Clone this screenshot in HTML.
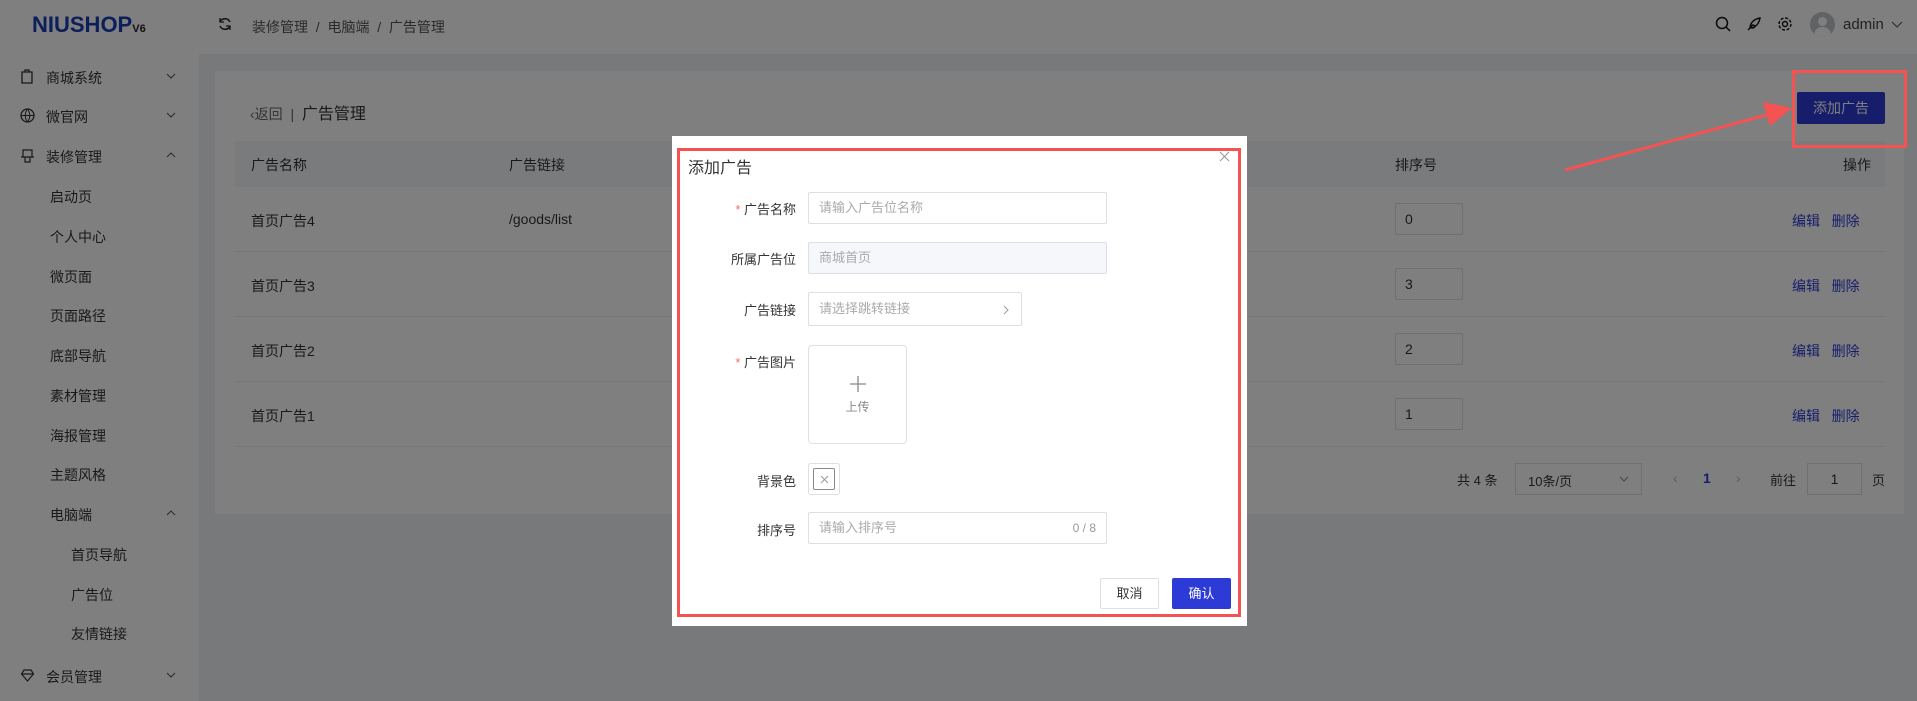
<!DOCTYPE html>
<html><head><meta charset="utf-8">
<style>
*{margin:0;padding:0;box-sizing:border-box}
body{width:1917px;height:701px;overflow:hidden;position:relative;background:#f0f2f5;font-family:"Liberation Sans","Noto Sans CJK SC",sans-serif;font-size:14px;color:#333}
.a{position:absolute}
.side{left:0;top:0;width:199px;height:701px;background:#fff}
.hdr{left:199px;top:0;width:1718px;height:55px;background:#fff;border-bottom:1px solid #eee}
.mi{position:absolute;left:0;width:199px;font-size:14px;color:#333}
.card{left:215px;top:71px;width:1689px;height:443px;background:#fff}
.th{left:235px;top:141px;width:1650px;height:46px;background:#f5f6fa}
.row{left:235px;width:1650px;border-bottom:1px solid #ebeef5;height:65px}
.sinp{width:68px;height:32px;border:1px solid #dcdfe6;border-radius:2px;padding-left:9px;line-height:30px}
.blue{color:#2d3bd6}
.ov{left:0;top:0;width:1917px;height:701px;background:rgba(0,0,0,0.5)}
.modal{left:672px;top:136px;width:575px;height:490px;background:#fff}
.lbl{position:absolute;right:451px;font-size:13px;color:#333;text-align:right}
.inp{position:absolute;left:136px;border:1px solid #dcdfe6;border-radius:2px;font-size:13px;color:#aaa;padding-left:10px}
svg.ic{position:absolute}
</style></head><body>
<div class="a side">
 <div class="a" style="left:32px;top:12px;font-size:22px;font-weight:bold;color:#1a3dba">NIUSHOP<span style="font-size:11px;color:#222">V6</span></div>
 <div class="mi" style="top:68px"><svg class="ic" style="left:20px;top:0" width="14" height="16"><path d="M2 4h10v11H2zM5 4V2h4v2" fill="none" stroke="#333" stroke-width="1.3"/></svg><span class="a" style="left:46px">商城系统</span><svg class="ic" style="left:166px;top:5px" width="10" height="6"><path d="M1 1l4 4 4-4" fill="none" stroke="#555"/></svg></div>
 <div class="mi" style="top:107px"><svg class="ic" style="left:20px;top:1px" width="15" height="15"><circle cx="7.5" cy="7.5" r="6.5" fill="none" stroke="#333" stroke-width="1.3"/><path d="M1 7.5h13M7.5 1c-3 4-3 9 0 13M7.5 1c3 4 3 9 0 13" fill="none" stroke="#333"/></svg><span class="a" style="left:46px">微官网</span><svg class="ic" style="left:166px;top:5px" width="10" height="6"><path d="M1 1l4 4 4-4" fill="none" stroke="#555"/></svg></div>
 <div class="mi" style="top:147px"><svg class="ic" style="left:20px;top:1px" width="15" height="15"><path d="M3 2h9v7H3zM1 9h13M5 9v5h5V9" fill="none" stroke="#333" stroke-width="1.2"/></svg><span class="a" style="left:46px">装修管理</span><svg class="ic" style="left:166px;top:5px" width="10" height="6"><path d="M1 5l4-4 4 4" fill="none" stroke="#555"/></svg></div>
 <div class="mi" style="top:187px"><span class="a" style="left:50px">启动页</span></div>
 <div class="mi" style="top:227px"><span class="a" style="left:50px">个人中心</span></div>
 <div class="mi" style="top:267px"><span class="a" style="left:50px">微页面</span></div>
 <div class="mi" style="top:306px"><span class="a" style="left:50px">页面路径</span></div>
 <div class="mi" style="top:346px"><span class="a" style="left:50px">底部导航</span></div>
 <div class="mi" style="top:386px"><span class="a" style="left:50px">素材管理</span></div>
 <div class="mi" style="top:426px"><span class="a" style="left:50px">海报管理</span></div>
 <div class="mi" style="top:465px"><span class="a" style="left:50px">主题风格</span></div>
 <div class="mi" style="top:505px"><span class="a" style="left:50px">电脑端</span><svg class="ic" style="left:166px;top:5px" width="10" height="6"><path d="M1 5l4-4 4 4" fill="none" stroke="#555"/></svg></div>
 <div class="mi" style="top:545px"><span class="a" style="left:71px">首页导航</span></div>
 <div class="mi" style="top:585px"><span class="a" style="left:71px">广告位</span></div>
 <div class="mi" style="top:624px"><span class="a" style="left:71px">友情链接</span></div>
 <div class="mi" style="top:667px"><svg class="ic" style="left:20px;top:1px" width="15" height="14"><path d="M7.5 13L1.5 6 4 2h7l2.5 4z M1.5 6h12" fill="none" stroke="#333" stroke-width="1.2"/></svg><span class="a" style="left:46px">会员管理</span><svg class="ic" style="left:166px;top:5px" width="10" height="6"><path d="M1 1l4 4 4-4" fill="none" stroke="#555"/></svg></div>
</div>
<div class="a hdr">
 <svg class="ic" style="left:19px;top:17px" width="14" height="14"><path d="M12 5A5.5 5.5 0 0 0 2.5 4M2 9a5.5 5.5 0 0 0 9.5 1" fill="none" stroke="#222" stroke-width="1.5"/><path d="M2 1v4h4M12 13V9H8" fill="none" stroke="#222" stroke-width="1.3"/></svg>
 <span class="a" style="left:53px;top:17px;color:#555">装修管理 &nbsp;/&nbsp; 电脑端 &nbsp;/&nbsp; 广告管理</span>
 <svg class="ic" style="left:1516px;top:16px" width="16" height="16"><circle cx="7" cy="7" r="5.5" fill="none" stroke="#111" stroke-width="1.5"/><path d="M11 11l4 4" stroke="#111" stroke-width="1.5"/></svg>
 <svg class="ic" style="left:1547px;top:16px" width="16" height="16"><path d="M4 12c0-5 4-9 10-10-1 6-5 10-10 10zM4 12l-2 2M7 9a1.5 1.5 0 1 0 0.1 0" fill="none" stroke="#111" stroke-width="1.4"/></svg>
 <svg class="ic" style="left:1578px;top:16px" width="16" height="16"><circle cx="8" cy="8" r="2.5" fill="none" stroke="#111" stroke-width="1.4"/><circle cx="8" cy="8" r="6" fill="none" stroke="#111" stroke-width="1.4" stroke-dasharray="3 1.7"/></svg>
 <span class="a" style="left:1611px;top:12px;width:25px;height:25px;border-radius:50%;background:#c0c4cc;overflow:hidden"><span class="a" style="left:8px;top:5px;width:9px;height:9px;border-radius:50%;background:#fff"></span><span class="a" style="left:4px;top:15px;width:17px;height:12px;border-radius:8px 8px 0 0;background:#fff"></span></span>
 <span class="a" style="left:1644px;top:16px;font-size:15px;color:#444">admin</span>
 <svg class="ic" style="left:1692px;top:21px" width="12" height="7"><path d="M1 1l5 5 5-5" fill="none" stroke="#555"/></svg>
</div>
<div class="a card"></div>
<span class="a" style="left:250px;top:100px;color:#666">‹返回 &nbsp;|&nbsp; <span style="color:#333;font-size:16px">广告管理</span></span>
<div class="a" style="left:1797px;top:92px;width:88px;height:32px;background:#2d3bd6;color:#fff;border-radius:2px;text-align:center;line-height:32px">添加广告</div>
<div class="a th"><span class="a" style="left:16px;top:14px">广告名称</span><span class="a" style="left:274px;top:14px">广告链接</span><span class="a" style="left:1160px;top:14px">排序号</span><span class="a" style="left:1608px;top:14px">操作</span></div>
<div class="a row" style="top:187px"><span class="a" style="left:16px;top:24px">首页广告4</span><span class="a" style="left:274px;top:24px">/goods/list</span><div class="a sinp" style="left:1160px;top:16px">0</div><span class="a blue" style="left:1557px;top:24px">编辑 &nbsp; 删除</span></div>
<div class="a row" style="top:252px"><span class="a" style="left:16px;top:24px">首页广告3</span><div class="a sinp" style="left:1160px;top:16px">3</div><span class="a blue" style="left:1557px;top:24px">编辑 &nbsp; 删除</span></div>
<div class="a row" style="top:317px"><span class="a" style="left:16px;top:24px">首页广告2</span><div class="a sinp" style="left:1160px;top:16px">2</div><span class="a blue" style="left:1557px;top:24px">编辑 &nbsp; 删除</span></div>
<div class="a row" style="top:382px"><span class="a" style="left:16px;top:24px">首页广告1</span><div class="a sinp" style="left:1160px;top:16px">1</div><span class="a blue" style="left:1557px;top:24px">编辑 &nbsp; 删除</span></div>
<span class="a" style="left:1457px;top:470px;font-size:13px">共 4 条</span>
<div class="a" style="left:1515px;top:463px;width:127px;height:32px;border:1px solid #dcdfe6;padding:7px 12px;font-size:13px">10条/页<svg style="position:absolute;right:12px;top:12px" width="10" height="6"><path d="M1 1l4 4 4-4" fill="none" stroke="#888"/></svg></div>
<span class="a" style="left:1673px;top:470px;color:#bbb">‹</span><span class="a blue" style="left:1703px;top:470px;font-weight:bold">1</span><span class="a" style="left:1736px;top:470px;color:#bbb">›</span>
<span class="a" style="left:1770px;top:470px;font-size:13px">前往</span>
<div class="a" style="left:1807px;top:463px;width:55px;height:32px;border:1px solid #dcdfe6;text-align:center;line-height:30px">1</div>
<span class="a" style="left:1872px;top:470px;font-size:13px">页</span>
<div class="a ov"></div>
<div class="a modal">
 <span class="a" style="left:16px;top:18px;font-size:16px;color:#333">添加广告</span>
 <svg class="ic" style="left:547px;top:15px" width="11" height="11"><path d="M1 1l9 9M10 1l-9 9" stroke="#999" stroke-width="1.1"/></svg>
 <span class="lbl" style="top:63px"><span style="color:#f56c6c">* </span>广告名称</span>
 <div class="inp" style="top:56px;width:299px;height:32px;line-height:30px">请输入广告位名称</div>
 <span class="lbl" style="top:113px">所属广告位</span>
 <div class="inp" style="top:106px;width:299px;height:32px;line-height:30px;background:#f5f7fa">商城首页</div>
 <span class="lbl" style="top:164px">广告链接</span>
 <div class="inp" style="top:156px;width:214px;height:34px;line-height:32px">请选择跳转链接<svg style="position:absolute;right:12px;top:12px" width="6" height="10"><path d="M1 1l4 4-4 4" fill="none" stroke="#999"/></svg></div>
 <span class="lbl" style="top:216px"><span style="color:#f56c6c">* </span>广告图片</span>
 <div class="inp" style="top:209px;width:99px;height:99px;padding:0;border-radius:4px;text-align:center;color:#888"><svg style="display:block;margin:30px auto 0" width="16" height="16"><path d="M8 0v16M0 8h16" stroke="#888" stroke-width="1.3"/></svg><div style="font-size:12px;margin-top:6px">上传</div></div>
 <span class="lbl" style="top:335px">背景色</span>
 <div class="inp" style="top:327px;width:32px;height:32px;padding:4px;border-radius:3px"><div style="width:22px;height:22px;border:1px solid #888;border-radius:2px;position:relative"><svg style="position:absolute;left:6px;top:6px" width="9" height="9"><path d="M1 1l7 7M8 1l-7 7" stroke="#999"/></svg></div></div>
 <span class="lbl" style="top:384px">排序号</span>
 <div class="inp" style="top:376px;width:299px;height:32px;line-height:30px">请输入排序号<span style="position:absolute;right:10px;font-size:12px;color:#999">0 / 8</span></div>
 <div class="a" style="left:428px;top:442px;width:59px;height:31px;border:1px solid #dcdfe6;border-radius:2px;text-align:center;line-height:29px;font-size:13px">取消</div>
 <div class="a" style="left:500px;top:442px;width:59px;height:31px;background:#2d3bd6;color:#fff;border-radius:2px;text-align:center;line-height:31px;font-size:13px">确认</div>
</div>
<div class="a" style="left:677px;top:148px;width:564px;height:469px;border:3px solid #f55252"></div>
<div class="a" style="left:1792px;top:70px;width:115px;height:78px;border:3px solid #f55252"></div>
<svg class="a" style="left:0;top:0" width="1917" height="701"><line x1="1565" y1="170" x2="1770" y2="114" stroke="#f55252" stroke-width="3"/><polygon points="1792,108 1763,102 1770,126" fill="#f55252"/></svg>
</body></html>
